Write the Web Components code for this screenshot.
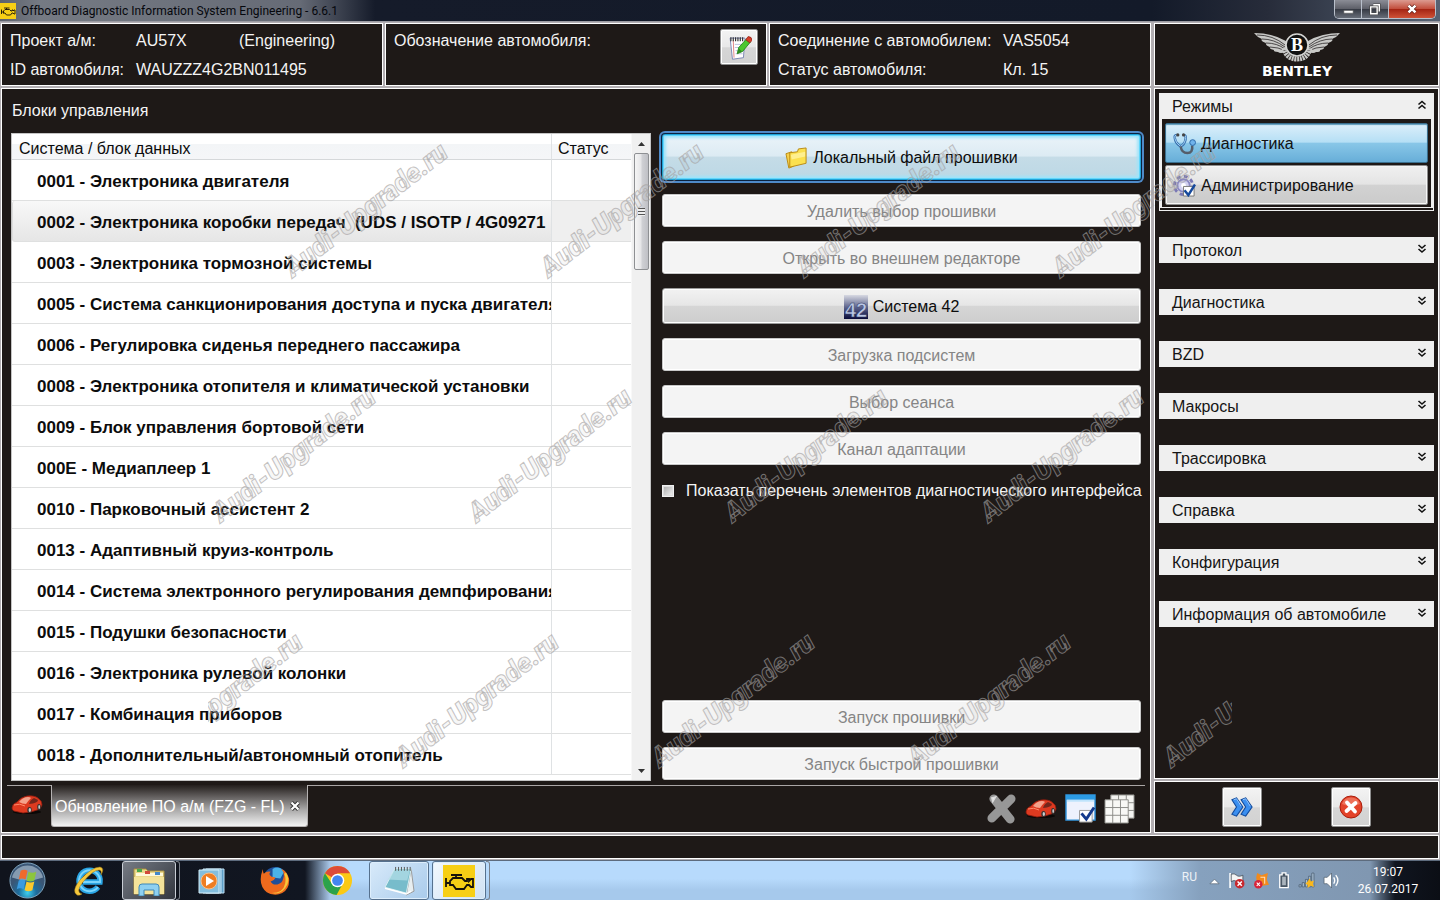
<!DOCTYPE html>
<html lang="ru">
<head>
<meta charset="utf-8">
<title>Offboard Diagnostic Information System Engineering - 6.6.1</title>
<style>
html,body{margin:0;height:100%;background:#1e1917}
body{font:16px/20px "Liberation Sans",Arial,sans-serif;color:#f4f4f4;overflow:hidden}
</style>
</head>
<body>
<odis-app></odis-app>
<script>
const define=(name,html,setup)=>{
  const tpl=document.createElement('template');
  tpl.innerHTML=html;
  customElements.define(name,class extends HTMLElement{
    constructor(){super();this.attachShadow({mode:'open'}).append(tpl.content.cloneNode(true));}
    connectedCallback(){if(setup&&!this.ready){this.ready=true;setup(this,this.shadowRoot);}}
  });
};

/* ---------- icons ---------- */
const engine='<path d="M3 13v9M3 18h4M7 21v-5l3-3h9l3 3h2v-2h2v2l2-2h2v8h-2l-2-2h-2l-3 4h-8l-3-4H7M8 10h11M13 10v3" fill="none" stroke="#16120a" stroke-width="1.800"/>';
const ICONS={
engine:['0 0 32 32','<rect width="32" height="32" fill="#f7cf15"/>'+engine],
note:['0 0 32 32','<path d="M4 4h19l-2 25-14 2z" fill="#fff" stroke="#6470a8"/><path d="M8 7l1 22" stroke="#d66" /><path d="M10 12h11M10 16h10M11 20h9M11 24h9" stroke="#aab4d6"/><path d="M5 3v5M8 3v5M11 3v5M14 3v5M17 3v5M20 3v5" stroke="#333" stroke-width="1.5"/><path d="M13 24l2-8L25 5l5 4-10 12z" fill="#4bc72e" stroke="#1e7a14"/><path d="M24 6l3-4q5 0 5 5l-3 3z" fill="#d8402c" stroke="#8f2015"/><path d="M13 24l2-7 4 4z" fill="#2d8a20"/>'],
folder:['0 0 24 24','<path d="M1 7l6-2 2 15-5 2z" fill="#f6d04a" stroke="#b98a14"/><path d="M5 6l8-1 1-3 8-1v16l-17 4z" fill="#fbe04e" stroke="#b98a14"/><path d="M6 8l15-3v5L7 13z" fill="#fff3a0" opacity=".8"/>'],
sys42:['0 0 24 24','<defs><linearGradient id="g" x2="0" y2="1"><stop stop-color="#d7d9e2"/><stop offset=".55" stop-color="#545b86"/><stop offset="1" stop-color="#0a0c3a"/></linearGradient></defs><rect width="24" height="24" fill="url(#g)"/><text x="1" y="22" font-family="Liberation Sans" font-weight="700" font-size="20" fill="#b9c6e4" stroke="#333c68" stroke-width=".5">42</text>'],
steth:['0 0 24 24','<path d="M4 3Q1 3 2 7q1 5 6 8 4-2 5-7 1-5-2-5" fill="none" stroke="#356fae" stroke-width="2.6"/><path d="M4 3Q1 3 2 7q1 5 6 8 4-2 5-7 1-5-2-5" fill="none" stroke="#a9d4f4" stroke-width="1"/><path d="M8 15q1 7 7 7t5-8" fill="none" stroke="#555e6b" stroke-width="2.6"/><circle cx="5" cy="3" r="1.7" fill="#444"/><circle cx="11" cy="3" r="1.7" fill="#444"/><circle cx="20.500" cy="11" r="3" fill="#6fb3ec" stroke="#2c69a8"/>'],
admin:['0 0 24 24','<circle cx="11" cy="12" r="9.500" fill="none" stroke="#7a78b4" stroke-width="3" stroke-dasharray="4 3.460"/><circle cx="11" cy="12" r="6.500" fill="#d2d1ee" stroke="#8a88c2" stroke-width="2"/><circle cx="11" cy="12" r="2.500" fill="#fff"/><path d="M11 13h11v10H11z" fill="#fff" stroke="#777"/><path d="M12 17l4 5 7-11" fill="none" stroke="#174a9c" stroke-width="2.600"/>'],
car:['0 0 32 20','<ellipse cx="16" cy="17" rx="14" ry="2" fill="#0a0807"/><path d="M1 13q0-4 5-6 4-5 10-6 8-1 12 3 3 2 3 6l-2 4-3 1-6 2-8 1-9-2q-2-1-2-3z" fill="#dd3a20" stroke="#8f1c0e" stroke-width=".8"/><path d="M8 7q4-5 9-5 2 0 3 1-3 3-5 6-4 0-7-2z" fill="#f4a28b"/><path d="M18 9q1-4 5-6l4 2q0 3-9 4z" fill="#71261b"/><path d="M3 10q6-2 11 1" stroke="#ff8a6a" fill="none"/><ellipse cx="18.500" cy="15" rx="2.200" ry="3" fill="#333"/><ellipse cx="18.800" cy="15" rx="1.200" ry="2" fill="#ccc"/><ellipse cx="28" cy="12" rx="1.800" ry="3" fill="#333"/><ellipse cx="28.200" cy="12" rx=".9" ry="2" fill="#ccc"/>'],
cross:['0 0 32 32','<path d="M8 6l17 21M26 6L6 26" stroke="#979797" stroke-width="9" stroke-linecap="round"/><path d="M6 5l4-1-3 5z" stroke="#ddd" stroke-width="1.500" fill="#eee"/>'],
wincheck:['0 0 32 32','<path d="M1 2h30v26H1z" fill="#eef2fd" stroke="#2c8fd6" stroke-width="1.500"/><path d="M1 2h30v5H1z" fill="#2c9be4"/><path d="M2 7h28v2H2z" fill="#bfe3fb"/><path d="M15 18h13v12H15z" fill="#fff" stroke="#999"/><path d="M17 21l5 6 8-12" fill="none" stroke="#153a8c" stroke-width="3"/>'],
grid:['0 0 32 32','<path d="M7 2h24v24H7z" fill="#f3f3f0" stroke="#8b8b87"/><path d="M15 2v24M23 2v24M7 10h24M7 18h24" stroke="#8b8b87"/><path d="M1 7h24v24H1z" fill="#f8f8f5" stroke="#8b8b87"/><path d="M9 7v24M17 7v24M1 15h24M1 23h24" stroke="#8b8b87"/>'],
next:['0 0 24 24','<path d="M1 4l5-2 7 10-7 10-5-2 5-8zM11 4l5-2 7 10-7 10-5-2 5-8z" fill="#3b8ff0" stroke="#114a9c" stroke-width="1.200"/><path d="M3 4l3-1 5 8M13 4l3-1 5 8" stroke="#9ccbff" fill="none"/>'],
stop:['0 0 24 24','<circle cx="12" cy="12" r="11" fill="#e3432a" stroke="#a91e0c"/><path d="M3 9a9.500 9.500 0 0 1 18 0q-9 4-18 0z" fill="#f4907a" opacity=".6"/><path d="M8 7.500l8 9M16.500 8l-9 8" stroke="#fff" stroke-width="3.800" stroke-linecap="round"/>'],
down:['0 0 10 10','<path d="M1.500 1l3.500 3 3.500-3M1.500 5l3.500 3 3.500-3" fill="none" stroke="#111" stroke-width="1.600"/>'],
up:['0 0 10 10','<path d="M1.500 4.500l3.500-3 3.500 3M1.500 8.500l3.500-3 3.500 3" fill="none" stroke="#111" stroke-width="1.600"/>'],
x:['0 0 10 10','<path d="M1.500 1.500l7 7M8.500 1.500l-7 7" stroke="#333" stroke-width="4"/><path d="M1.500 1.500l7 7M8.500 1.500l-7 7" stroke="#fff" stroke-width="2.200"/>'],
min:['0 0 14 14','<path d="M2 8h10v3H2z" fill="#fff" stroke="#555" stroke-width=".6"/>'],
max:['0 0 14 14','<path d="M5 2h7v8M2 4.500h7.500v8H2z" fill="none" stroke="#444" stroke-width="3"/><path d="M5 2h7v8M2 4.500h7.500v8H2z" fill="none" stroke="#fff" stroke-width="1.600"/>'],
close:['0 0 14 14','<path d="M3 3l8 8M11 3l-8 8" stroke="#5b1d16" stroke-width="4.600"/><path d="M3 3l8 8M11 3l-8 8" stroke="#fff" stroke-width="3"/>'],
start:['0 0 40 40','<defs><radialGradient id="o" cy=".85"><stop stop-color="#3fd0ee"/><stop offset=".5" stop-color="#1d6e9e"/><stop offset="1" stop-color="#3a5675"/></radialGradient></defs><circle cx="20" cy="20" r="18" fill="url(#o)" stroke="#7fa6bf"/><path d="M4 17a16.500 16.500 0 0 1 32 0q-16 6-32 0z" fill="#cfe0ec" opacity=".5"/><path d="M13 10q4-2 7 0l-2 9q-4-2-7 0z" fill="#ef6a2d"/><path d="M21 11q4 2 8 0l-2 9q-4 2-8 0z" fill="#8cc63e"/><path d="M11 20q4-2 7 0l-2 9q-4-2-7 0z" fill="#3a9be0"/><path d="M19 21q4 2 8 0l-2 9q-4 2-8 0z" fill="#fbc92c"/>'],
ie:['0 0 32 32','<path d="M25 22a10.500 10.500 0 1 1 2-5H10" fill="none" stroke="#2aa5e4" stroke-width="5.500"/><path d="M25 22a10.500 10.500 0 1 1 2-5H10" fill="none" stroke="#7cd5fa" stroke-width="2"/><path d="M4 30Q-2 26 7 15 19 2 27 2q5 1 1 8 1-5-2-5-6 0-16 12Q2 27 9 29q-3 2-5 1z" fill="#f5c83c" stroke="#a57c14" stroke-width=".5"/>'],
files:['0 0 34 30','<path d="M2 3h12l2 2h16v23H2z" fill="#ead88c" stroke="#a98f3e"/><path d="M4 7h27v3H4z" fill="#fff9da"/><path d="M5 3h5v3H5z" fill="#4aa84a"/><path d="M13 5h5v3h-5z" fill="#d24a3a"/><path d="M23 6h5v3h-5z" fill="#4488c8"/><path d="M2 11h30v17H2z" fill="#f4e39a"/><path d="M7 30V21q0-3 3-3h14q3 0 3 3v9h-5v-6H12v6z" fill="#8ed0f0" stroke="#3f88b8"/>'],
wmp:['0 0 28 28','<path d="M8 2h18v24H8z" fill="#5e9ec6" stroke="#bde0f4"/><path d="M5 2h18v24H5z" fill="#6fb0d6" stroke="#cde8f6"/><path d="M1 3h20v23H1z" fill="#83bede" stroke="#d3edf8"/><circle cx="11" cy="14" r="8" fill="#ee7d22" stroke="#f9c08a"/><path d="M8 9l8 5-8 5z" fill="#fff"/>'],
firefox:['0 0 32 32','<circle cx="17" cy="15" r="13" fill="#1f4f9a"/><path d="M14 4q7-4 12 3l-4 7-8-1z" fill="#4bb2e8"/><path d="M4 4q0 3 1 5 3-3 7-2-3 3 1 5l4 1q-1 3-5 4 2 4 7 3 5-1 6-6 2-6-2-10 6 2 8 10 1 10-7 15-8 4-16-1Q-2 20 4 4z" fill="#ee6a1d"/><path d="M28 8q5 9-1 16-6 7-14 5 12 0 14-10 1-6-1-10z" fill="#f9c83a"/>'],
chrome:['0 0 32 32','<circle cx="16" cy="16" r="15" fill="#fbc915"/><path d="M16 16L3 8.500A15 15 0 0 1 29 8.500H16z" fill="#dd4b38"/><path d="M3 8.500A15 15 0 0 0 15 31l6.500-12H10z" fill="#2ba24c"/><circle cx="16" cy="16" r="7" fill="#fff"/><circle cx="16" cy="16" r="5.500" fill="#4386f0"/>'],
notepad:['0 0 32 32','<path d="M28 4l3 23-8 4z" fill="#e8eef0" stroke="#999"/><path d="M11 4h17L23 29 1 23z" fill="#77bccb" stroke="#d8eef2"/><path d="M11 5h16l-3 11-20-1z" fill="#b7e0e8" opacity=".7"/><path d="M1 24l22 6 5-3" stroke="#fff" fill="none" stroke-width="1.500"/><path d="M12 2v4M15 2v4M18 2v4M21 2v4M24 2v4M27 2v4" stroke="#555"/>'],
trayup:['0 0 12 8','<path d="M1 7h10L6 2z" fill="#fff" stroke="#52606e" stroke-width=".7"/>'],
flag:['0 0 16 16','<path d="M2 1v14" stroke="#fff" stroke-width="1.600"/><path d="M3 2q3-1 5 1t6 0v7q-4 1-6-1T3 9z" fill="#f4f4f4" stroke="#3d4650" stroke-width=".7"/><circle cx="11" cy="11" r="4.500" fill="#c8262c"/><path d="M9 9l4 4M13 9l-4 4" stroke="#fff" stroke-width="1.400"/>'],
avast:['0 0 16 16','<path d="M4 1l4 2 6-2-1 6 2 5-6 1-5-1-1-7z" fill="#f28a1c"/><path d="M7 5h4v6" stroke="#ffe0b8" fill="none"/><circle cx="5" cy="11.500" r="4" fill="#d8233a"/><path d="M3.500 10l3 3M6.500 10l-3 3" stroke="#fff"/>'],
battery:['0 0 12 18','<path d="M4 1h4v2h2.500v13.500h-9V3H4z" fill="#4a5866" stroke="#fff" stroke-width="1.400"/><path d="M4 5h4v9H4z" fill="#aab4bd"/>'],
signal:['0 0 16 16','<path d="M1 14v-2h2v2zM4 14v-4h2v4zM7 14V7h2v7zM10 14V4h2v10zM13 14V1h2v13z" fill="#a9c0d4" stroke="#3e4f60" stroke-width=".6"/><path d="M11 6l1 3 3-1-1 3 1 3-3-1-3 2V12l-2-1 2-2z" fill="#fbb81c"/>'],
sound:['0 0 16 16','<path d="M1 5h3l4-4v14l-4-4H1z" fill="#fff" stroke="#44525f" stroke-width=".6"/><path d="M10 5q2 3 0 6M12 3q4 5 0 10" fill="none" stroke="#fff" stroke-width="1.300"/>'],
bentley:['0 0 86 48','<g fill="#c9c9c7"><path d="M32 10Q18 2 0 2q3 4 8 6-2 2 4 4-1 2 4 4-1 2 4 3-1 2 4 2 2 2 8 0z"/><path d="M54 10Q68 2 86 2q-3 4-8 6 2 2-4 4 1 2-4 4 1 2-4 3 1 2-4 2-2 2-8 0z"/></g><g stroke="#2a2627" fill="none" stroke-width=".8"><path d="M3 4q16 0 28 10M8 8q12 0 23 8M12 12q11 0 19 6M16 16q8 0 16 4M83 4q-16 0-28 10M78 8q-12 0-23 8M74 12q-11 0-19 6M70 16q-8 0-16 4"/></g><path d="M30 17q2 11 13 11t13-11" fill="none" stroke="#c9c9c7" stroke-width="5" stroke-dasharray="2 .7"/><ellipse cx="43" cy="14" rx="11" ry="11" fill="#111" stroke="#d6d6d4" stroke-width="1.600"/><text x="43" y="20" text-anchor="middle" font-family="Liberation Serif" font-weight="700" font-size="18" fill="#fff">B</text><text x="43" y="45" text-anchor="middle" font-family="DejaVu Sans" font-weight="700" font-size="14" fill="#fff">BENTLEY</text>']
};
define('ui-icon','<style>:host{display:inline-flex;flex:none}svg{display:block}</style>',(el,root)=>{
  const [box,body]=ICONS[el.getAttribute('name')];
  root.innerHTML+=`<svg aria-hidden="true" viewBox="${box}" width="${el.getAttribute('w')}" height="${el.getAttribute('h')}">${body}</svg>`;
});

/* ---------- window chrome ---------- */
define('title-bar',`<style>
:host{display:flex;height:22px;box-sizing:border-box;border-bottom:1px solid #9b9ba2;background:linear-gradient(90deg,#5d626d 0,#757a83 40px,#666b76 300px,#303644 350px,#151b2a 375px,#131a29 80%,#272c3a 88%,#566273 100%);font:12px/20px Roboto,"Open Sans",sans-serif;color:#05070c;justify-content:space-between}
.t{display:flex;gap:5px;align-items:center}
.c{display:flex;height:18px;margin-right:4px;border:1px solid #b9c0cb;border-top:0;border-radius:0 0 5px 5px;overflow:hidden}
button{border:0;border-right:1px solid #b9c0cb;padding:0;height:18px;width:27px;background:linear-gradient(#8b8d96,#5e6069 48%,#343842 50%,#676d78);display:flex;align-items:center;justify-content:center}
button:last-child{width:46px;border:0;background:linear-gradient(#dc9b90,#c24f3d 48%,#a32312 50%,#cf5237)}
</style><div class="t"><ui-icon name="engine" w="16" h="16"></ui-icon><slot></slot></div>
<div class="c"><button aria-label="Свернуть"><ui-icon name="min" w="13" h="13"></ui-icon></button><button aria-label="Восстановить"><ui-icon name="max" w="12" h="12"></ui-icon></button><button aria-label="Закрыть"><ui-icon name="close" w="12" h="12"></ui-icon></button></div>`);

define('ui-panel',`<style>:host{display:block;box-sizing:border-box;border:1px solid #fff;background:#1e1917;min-width:0;min-height:0}</style><slot></slot>`);

define('info-fields',`<style>:host{display:grid;grid-template-columns:var(--cols);padding:7px 8px 0;row-gap:9px;white-space:nowrap}</style><slot></slot>`);

define('tool-button',`<style>:host{display:block}
button{width:var(--size,38px);height:var(--tall,var(--size,38px));padding:0;border:1px solid #8e8e8e;border-radius:2px;box-shadow:inset 0 0 0 1px #fff;background:linear-gradient(#f3f3f3,#e8e8e8 50%,#d6d6d6 52%,#d2d2d2);display:flex;align-items:center;justify-content:center}
</style><button><slot></slot></button>`,(el,r)=>r.querySelector('button').setAttribute('aria-label',el.getAttribute('label')));

/* ---------- control unit list ---------- */
const UNITS=['0001 - Электроника двигателя','0002 - Электроника коробки передач\u00a0 (UDS / ISOTP / 4G09271','0003 - Электроника тормозной системы','0005 - Система санкционирования доступа и пуска двигателя','0006 - Регулировка сиденья переднего пассажира','0008 - Электроника отопителя и климатической установки','0009 - Блок управления бортовой сети','000E - Медиаплеер 1','0010 - Парковочный ассистент 2','0013 - Адаптивный круиз-контроль','0014 - Система электронного регулирования демпфирования','0015 - Подушки безопасности','0016 - Электроника рулевой колонки','0017 - Комбинация приборов','0018 - Дополнительный/автономный отопитель'];
define('unit-table',`<style>
:host{display:flex;background:#fff;color:#0c0c0c;border:1px solid #c4c4c4;box-sizing:border-box;overflow:hidden;min-width:0;min-height:0}
.v{flex:1;overflow:hidden;min-width:0}
table{width:100%;border-collapse:separate;border-spacing:0;table-layout:fixed}
.s{width:80px}
th,td{box-sizing:border-box;padding:0;text-align:left;white-space:nowrap;overflow:hidden;border-bottom:1px solid #dfe0e0}
th{height:26px;font-weight:400;padding:4px 0 0 7px;background:linear-gradient(#fff 40%,#f3f5f7 42%,#f5f6f8);border-color:#d5d8da}
th+th,td+td{border-left:1px solid #dfe2e4;padding-left:6px}
td{height:41px;font-size:17px;font-weight:700;padding:3px 0 0 25px}
tr.sel td{background:#efefef}
tr.sel td:first-child{background:linear-gradient(#f8f8f8,#e6e6e6);border-left:1px solid #ddd;border-radius:3px 0 0 3px;padding-left:24px}
.bar{width:18px;background:#f0f0f0;display:flex;flex-direction:column;align-items:center;border-left:1px solid #f8f8f8}
.a{height:19px;display:flex;align-items:center}
.thumb{height:117px;width:15px;box-sizing:border-box;border:1px solid #8e9093;border-radius:2px;background:linear-gradient(90deg,#f5f5f5,#e6e6e8 45%,#cfd0d4 55%,#bfc0c5);display:flex;align-items:center;justify-content:center}
.thumb i{width:7px;height:8px;background:repeating-linear-gradient(#555 0 1px,#eee 1px 3px)}
.fill{flex:1}
</style><div class="v"><table><colgroup><col><col class="s"></colgroup><thead><tr><th>Система / блок данных</th><th>Статус</th></tr></thead><tbody></tbody></table></div>
<div class="bar"><span class="a"><svg width="7" height="4"><path d="M0 4L3.500 0 7 4z" fill="#333"/></svg></span><div class="thumb"><i></i></div><span class="fill"></span><span class="a"><svg width="7" height="4"><path d="M0 0L3.500 4 7 0z" fill="#333"/></svg></span></div>`,(el,r)=>{
  r.querySelector('tbody').innerHTML=UNITS.map((u,i)=>`<tr${i===1?' class="sel"':''}><td>${u}</td><td></td></tr>`).join('');
});

define('action-button',`<style>
:host{display:block}
button{display:flex;width:100%;height:33px;align-items:center;justify-content:center;gap:5px;box-sizing:border-box;padding:2px 0 0;font:inherit;color:#0c0c0c;border:1px solid #9c9c9c;border-radius:3px;box-shadow:inset 0 0 0 1px #fff;background:linear-gradient(#f2f2f2,#e6e6e6 48%,#d6d6d6 50%,#cdcdcd)}
button:disabled{color:#858585;background:#f4f4f4;border-color:#c8c8c8}
:host([kind=normal]) button{height:36px}
:host([kind=focus]) button{height:46px;border-color:#1fa3d8;box-shadow:inset 0 0 0 1px #62d6fb,inset 0 0 3px 3px #9fe4fa,0 0 0 1px #0b2340,0 0 0 3px #4f8ac8;background:linear-gradient(#eaf3f9,#dcebf3 48%,#c5dce7 50%,#bcd8e5)}
</style><button><slot></slot></button>`,(el,r)=>{r.querySelector('button').disabled=!el.hasAttribute('kind');});

define('check-line',`<style>:host{display:block}label{display:flex;align-items:center;white-space:nowrap;gap:12px}
input{appearance:none;width:12px;height:12px;margin:0;flex:none;border:1px solid #f0f0f0;background:linear-gradient(135deg,#aaa,#f4f4f4);box-shadow:inset 0 0 0 1px #ddd}</style><label><input type="checkbox"><slot></slot></label>`);

define('flash-page',`<style>
:host{display:flex;flex-direction:column;height:100%;box-sizing:border-box;padding:0 5px 5px}
h1{font:inherit;margin:12px 5px}
.cols{flex:1;display:grid;grid-template-columns:minmax(0,640fr) minmax(0,486fr);gap:8px;min-height:0;padding:0 0 4px 4px}
.act{display:flex;flex-direction:column;gap:14px;padding:1px 4px 1px 3px}
.act check-line{margin-top:2px}
.gap{flex:1}
</style>
<h1>Блоки управления</h1>
<div class="cols"><unit-table></unit-table>
<div class="act">
<action-button kind="focus"><ui-icon name="folder" w="23" h="23"></ui-icon>Локальный файл прошивки</action-button>
<action-button>Удалить выбор прошивки</action-button>
<action-button>Открыть во внешнем редакторе</action-button>
<action-button kind="normal"><ui-icon name="sys42" w="24" h="24"></ui-icon>Система 42</action-button>
<action-button>Загрузка подсистем</action-button>
<action-button>Выбор сеанса</action-button>
<action-button>Канал адаптации</action-button>
<check-line>Показать перечень элементов диагностического интерфейса</check-line>
<span class="gap"></span>
<action-button>Запуск прошивки</action-button>
<action-button>Запуск быстрой прошивки</action-button>
</div></div>
<tab-strip></tab-strip>`);

define('tab-strip',`<style>
:host{display:flex;height:42px;flex:none}
.l,.r{border-top:1px solid #aaa6a6;display:flex;box-sizing:border-box}
.l{width:44px;padding:9px 4px}
.tab{display:flex;align-items:center;gap:5px;box-sizing:border-box;height:42px;padding:2px 5px 0 3px;border:1px solid #b5b2b2;border-top:0;border-radius:0 0 3px 3px;background:linear-gradient(#231e1c,#4f4b4a 20%,#a9a8a8 60%,#f2f2f2);color:#fff;white-space:nowrap}
.x{border:0;background:none;padding:0;width:12px;height:12px;display:flex}
.r{flex:1;justify-content:flex-end;align-items:center;gap:8px;padding:4px 10px 0 0}
.r button{border:0;padding:0;background:none;display:flex}
</style><div class="l"><ui-icon name="car" w="32" h="20"></ui-icon></div>
<div class="tab"><span>Обновление ПО а/м (FZG - FL)</span><button class="x" aria-label="Закрыть вкладку"><ui-icon name="x" w="10" h="10"></ui-icon></button></div>
<div class="r"><button aria-label="Удалить"><ui-icon name="cross" w="31" h="31"></ui-icon></button><button aria-label="Автомобиль"><ui-icon name="car" w="32" h="20"></ui-icon></button><button aria-label="Выбор"><ui-icon name="wincheck" w="31" h="31"></ui-icon></button><button aria-label="Таблица"><ui-icon name="grid" w="31" h="31"></ui-icon></button></div>`);

/* ---------- sidebar ---------- */
define('nav-section',`<style>
:host{display:block;color:#151515}
.h{font:inherit;display:flex;width:100%;box-sizing:border-box;height:26px;align-items:center;justify-content:space-between;border:0;background:#efefef;color:inherit;padding:2px 7px 0 13px}
.h ui-icon{margin-bottom:4px}
.b{display:none}
:host([open]) .b{display:flex;flex-direction:column;gap:2px;border:3px solid #efefef;border-top:0;border-bottom:1px solid #efefef;padding:4px 3px 2px}
:host([open]) .e{height:3px;box-sizing:border-box;border:1px solid #efefef;border-top:0;}
</style><button class="h"><span class="n"></span></button><div class="b"><slot></slot></div><div class="e"></div>`,(el,r)=>{
  r.querySelector('.n').textContent=el.getAttribute('label');
  r.querySelector('.h').insertAdjacentHTML('beforeend',`<ui-icon name="${el.hasAttribute('open')?'up':'down'}" w="10" h="10"></ui-icon>`);
});
define('mode-button',`<style>:host{display:block}
button{display:flex;align-items:center;gap:5px;width:100%;height:40px;box-sizing:border-box;font:inherit;color:#111;padding:1px 7px 0;border:1px solid #8e8e8e;border-radius:2px;box-shadow:inset 0 0 0 1px #f6f6f6;background:linear-gradient(#f0f0f0,#e4e4e4 48%,#d2d2d2 50%,#cbcbcb)}
:host([active]) button{border-color:#3a6f8e;box-shadow:inset 0 1px 1px #5c9ab9;background:linear-gradient(#dceffa,#b5dff5 48%,#89c7e8 50%,#67aed8)}
</style><button><slot></slot></button>`);
define('side-nav',`<style>:host{display:flex;flex-direction:column;gap:26px;padding:4px}</style>
<nav-section open label="Режимы"><mode-button active><ui-icon name="steth" w="23" h="23"></ui-icon>Диагностика</mode-button><mode-button><ui-icon name="admin" w="23" h="23"></ui-icon>Администрирование</mode-button></nav-section>
<nav-section label="Протокол"></nav-section><nav-section label="Диагностика"></nav-section><nav-section label="BZD"></nav-section><nav-section label="Макросы"></nav-section><nav-section label="Трассировка"></nav-section><nav-section label="Справка"></nav-section><nav-section label="Конфигурация"></nav-section><nav-section label="Информация об автомобиле"></nav-section>`);

/* ---------- taskbar ---------- */
define('task-bar',`<style>
:host{display:flex;height:40px;flex:none;box-sizing:border-box;border-top:1px solid #5d6b7d;background:linear-gradient(90deg,#10141d 0,#111621 305px,#a9c8ea 330px,transparent 350px,transparent calc(100% - 310px),#86a1be calc(100% - 240px),#8097b1 calc(100% - 70px),#10151f calc(100% - 45px),#0b0e15 100%),linear-gradient(#b7dafc 45%,#a6c9ec 75%);font:12px/17px Roboto,"Open Sans",sans-serif;color:#fff;justify-content:space-between}
.apps,.tray{display:flex;align-items:center}
.apps button,.tray button{border:0;background:none;padding:0;display:flex;align-items:center;justify-content:center;height:39px}
.apps button{width:63px}
.apps .st{width:55px}
.apps .ie{width:67px}
.apps .on{width:54px;border:1px solid #c9ced6;border-radius:3px;background:linear-gradient(135deg,#767b84,#32363f)}
.apps .edge{width:4px;height:39px;box-sizing:border-box;border:1px solid #7a808a;border-left:0;border-radius:0 3px 3px 0}
.apps .win{width:60px;border:1px solid #56718e;border-radius:3px;box-shadow:inset 0 0 0 1px #ddeefc;background:linear-gradient(135deg,#d8eafa,#a9cbeb)}
.apps .cur{width:54px;background:linear-gradient(135deg,#f2f8fd,#cfe1f3);margin-left:3px}
.tray{gap:8px}
.clock{text-align:center;margin:0 -4px 0 4px;width:72px}
.lang{margin:-6px 4px 0 0;opacity:.85}
.show{width:12px;height:39px;box-sizing:border-box;border:1px solid #76808c;background:linear-gradient(135deg,#5b626c,#14181f 60%)}
</style>
<div class="apps"><button class="st" aria-label="Пуск"><ui-icon name="start" w="39" h="39"></ui-icon></button><button class="ie" aria-label="Internet Explorer"><ui-icon name="ie" w="32" h="32"></ui-icon></button><button class="on" aria-label="Проводник"><ui-icon name="files" w="34" h="30"></ui-icon></button><span class="edge"></span><button class="wmp" aria-label="Проигрыватель"><ui-icon name="wmp" w="28" h="28"></ui-icon></button><button aria-label="Firefox"><ui-icon name="firefox" w="31" h="31"></ui-icon></button><button aria-label="Chrome"><ui-icon name="chrome" w="31" h="31"></ui-icon></button><button class="win" aria-label="Блокнот"><ui-icon name="notepad" w="31" h="31"></ui-icon></button><button class="win cur" aria-label="ODIS"><ui-icon name="engine" w="32" h="32"></ui-icon></button><span class="edge"></span></div>
<div class="tray"><span class="lang">RU</span><ui-icon name="trayup" w="11" h="8"></ui-icon><ui-icon name="flag" w="17" h="17"></ui-icon><ui-icon name="avast" w="17" h="17"></ui-icon><ui-icon name="battery" w="12" h="17"></ui-icon><ui-icon name="signal" w="17" h="17"></ui-icon><ui-icon name="sound" w="17" h="17"></ui-icon><div class="clock">19:07<br>26.07.2017</div><button class="show" aria-label="Свернуть все окна"></button></div>`);

/* ---------- repeating diagonal watermark, laid over the page ---------- */
define('water-mark',`<style>:host{position:absolute;inset:0;pointer-events:none;overflow:hidden}svg{display:block;width:100%;height:100%}
text{font:italic 900 27px Roboto,"Liberation Sans",sans-serif;fill:#8881;stroke:#a3a0a0;stroke-width:1;stroke-opacity:.65}</style><svg aria-hidden="true"><defs><clipPath id="c"><rect x="208" width="1024" height="900"/></clipPath></defs><g clip-path="url(#c)"></g></svg>`,(el,r)=>{
  const rows=[[285,280,4],[213,525,4],[140,770,5]];
  r.querySelector('g').innerHTML=rows.map(([x,y,n])=>Array.from({length:n},(_,i)=>`<text transform="translate(${x+8+i*256} ${y-2}) rotate(-38)">Audi-Upgrade.ru</text>`).join('')).join('');
});

define('odis-app',`<style>
:host{display:flex;flex-direction:column;height:100vh;position:relative}
.frame{flex:1;min-height:0;display:grid;grid-template-columns:minmax(0,1fr) 285px;grid-template-rows:63px minmax(0,1fr) 24px;gap:2px 3px;padding:1px;background:#b2aeb2}
.info{display:grid;grid-template-columns:repeat(3,minmax(0,1fr));gap:2px}
.desc{display:flex;justify-content:space-between;padding:5px 8px 0}
.desc span{margin-top:2px}
.logo{display:flex;justify-content:center;padding-top:7px}
.side{display:grid;grid-template-rows:minmax(0,1fr) 52px;gap:2px}
.foot{display:flex;justify-content:space-between;padding:5px 67px}
.status{grid-column:1/-1}
</style>
<title-bar>Offboard Diagnostic Information System Engineering - 6.6.1</title-bar>
<div class="frame">
<div class="info">
<ui-panel><info-fields style="--cols:126px 103px auto"><span>Проект а/м:</span><span>AU57X</span><span>(Engineering)</span><span>ID автомобиля:</span><span>WAUZZZ4G2BN011495</span></info-fields></ui-panel>
<ui-panel><div class="desc"><span>Обозначение автомобиля:</span><tool-button label="Изменить" style="--size:38px;--tall:36px"><ui-icon name="note" w="25" h="25"></ui-icon></tool-button></div></ui-panel>
<ui-panel><info-fields style="--cols:225px auto"><span>Соединение с автомобилем:</span><span>VAS5054</span><span>Статус автомобиля:</span><span>Кл. 15</span></info-fields></ui-panel>
</div>
<ui-panel><div class="logo"><ui-icon name="bentley" w="86" h="48"></ui-icon></div></ui-panel>
<ui-panel><flash-page></flash-page></ui-panel>
<div class="side"><ui-panel><side-nav></side-nav></ui-panel>
<ui-panel><div class="foot"><tool-button label="Далее" style="--size:40px"><ui-icon name="next" w="24" h="22"></ui-icon></tool-button><tool-button label="Отмена" style="--size:40px"><ui-icon name="stop" w="24" h="24"></ui-icon></tool-button></div></ui-panel></div>
<ui-panel class="status"></ui-panel>
</div>
<task-bar></task-bar>
<water-mark></water-mark>`);
</script>
</body>
</html>
